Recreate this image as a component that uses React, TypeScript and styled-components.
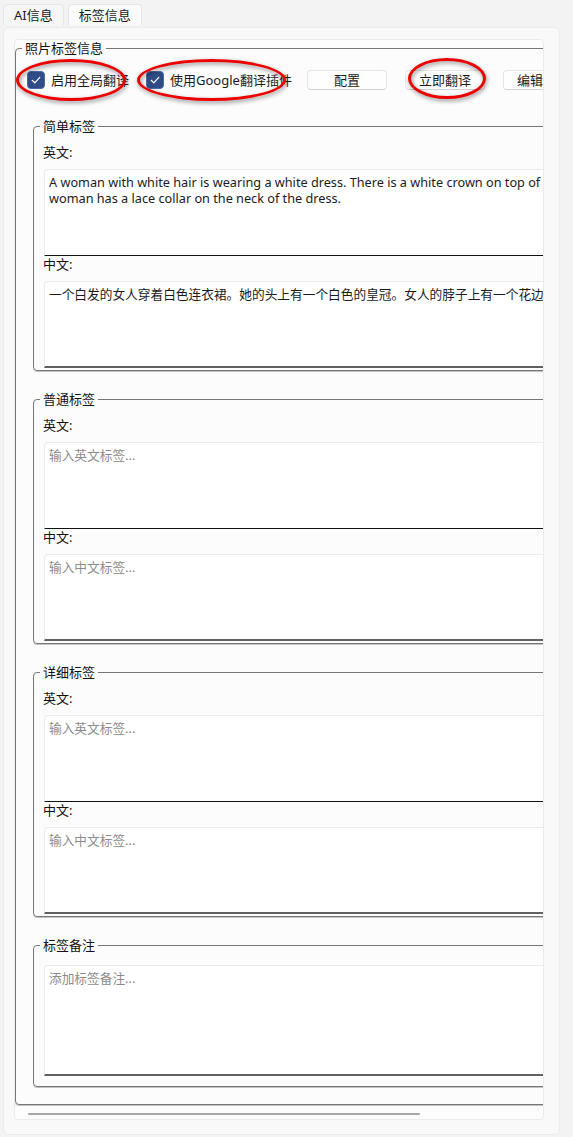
import React from 'react'
import styled, { createGlobalStyle } from 'styled-components'

const EN_TEXT =
    'A woman with white hair is wearing a white dress. There is a white crown on top of her head. The\nwoman has a lace collar on the neck of the dress.'
const ZH_TEXT =
    '一个白发的女人穿着白色连衣裙。她的头上有一个白色的皇冠。女人的脖子上有一个花边领。'

type TagGroup = {
    title: string
    en: string
    zh: string
}

const groups: TagGroup[] = [
    { title: '简单标签', en: EN_TEXT, zh: ZH_TEXT },
    { title: '普通标签', en: '', zh: '' },
    { title: '详细标签', en: '', zh: '' },
]

function CheckMark() {
    return (
        <svg width="12" height="12" viewBox="0 0 12 12">
            <polyline
                points="2.2,6.3 4.8,8.8 9.8,3.4"
                fill="none"
                stroke="#fff"
                strokeWidth="1.2"
                strokeLinecap="round"
                strokeLinejoin="round"
            />
        </svg>
    )
}

export default function App() {
    return (
        <>
            <GlobalStyle />
            <Page>
                <TabBar>
                    <Tab>AI信息</Tab>
                    <Tab $active>标签信息</Tab>
                </TabBar>
                <Card>
                    <ScrollArea>
                        <OuterGroup>
                            <Legend>照片标签信息</Legend>
                            <OuterBody>
                                <ToolRow>
                                    <Annotated $gap={17}>
                                        <CheckItem>
                                            <CheckBox>
                                                <CheckMark />
                                            </CheckBox>
                                            启用全局翻译
                                        </CheckItem>
                                        <Ellipse $left={-11} $top={-12} $w={110} $h={42} />
                                    </Annotated>
                                    <Annotated $gap={15}>
                                        <CheckItem>
                                            <CheckBox>
                                                <CheckMark />
                                            </CheckBox>
                                            使用Google翻译插件
                                        </CheckItem>
                                        <Ellipse $left={-9} $top={-12} $w={149} $h={42} />
                                    </Annotated>
                                    <Annotated $gap={18}>
                                        <Button>配置</Button>
                                    </Annotated>
                                    <Annotated $gap={18}>
                                        <Button>立即翻译</Button>
                                        <Ellipse $left={3} $top={-12} $w={78} $h={41} />
                                    </Annotated>
                                    <Annotated $gap={0}>
                                        <Button>编辑标签</Button>
                                    </Annotated>
                                </ToolRow>
                                <GroupList>
                                    {groups.map((g) => (
                                        <Group key={g.title}>
                                            <Legend>{g.title}</Legend>
                                            <GroupBody>
                                                <FieldLabel>英文:</FieldLabel>
                                                <TextBox
                                                    wrap="off"
                                                    defaultValue={g.en}
                                                    placeholder="输入英文标签..."
                                                    $height={87}
                                                    $dark
                                                />
                                                <FieldLabel>中文:</FieldLabel>
                                                <TextBox
                                                    wrap="off"
                                                    defaultValue={g.zh}
                                                    placeholder="输入中文标签..."
                                                    $height={87}
                                                />
                                            </GroupBody>
                                        </Group>
                                    ))}
                                    <Group>
                                        <Legend>标签备注</Legend>
                                        <NoteBody>
                                            <TextBox
                                                wrap="off"
                                                placeholder="添加标签备注..."
                                                $height={111}
                                            />
                                        </NoteBody>
                                    </Group>
                                </GroupList>
                            </OuterBody>
                        </OuterGroup>
                        <ScrollThumb />
                    </ScrollArea>
                </Card>
            </Page>
        </>
    )
}

const GlobalStyle = createGlobalStyle`
    * {
        box-sizing: border-box;
    }
    html, body {
        margin: 0;
        padding: 0;
        background: #f3f3f3;
    }
    body {
        font-family: "Noto Sans", "Noto Sans CJK SC", sans-serif;
        font-size: 13px;
        color: #1b1b1b;
    }
`

const Page = styled.div`
    width: 573px;
    height: 1137px;
    padding-top: 4px;
    overflow: hidden;
`

const TabBar = styled.div`
    display: flex;
    gap: 4px;
    padding-left: 3px;
    height: 21px;
`

const Tab = styled.div<{ $active?: boolean }>`
    height: 21px;
    padding: 0 10px;
    display: flex;
    align-items: center;
    line-height: 17px;
    background: ${(p) => (p.$active ? '#fbfbfb' : '#f6f6f6')};
    border: 1px solid #e6e6e6;
    border-bottom: none;
    border-radius: 4px 4px 0 0;
    color: #1b1b1b;
`

const Card = styled.div`
    margin: 2px 0 0 3px;
    width: 557px;
    height: 1108px;
    background: #f9f9f9;
    border: 1px solid #ececec;
    border-radius: 6px;
    padding: 11px 0 0 10px;
`

const ScrollArea = styled.div`
    width: 530px;
    height: 1081px;
    background: #fcfcfc;
    border: 1px solid #ebebeb;
    border-radius: 4px;
    overflow: hidden;
`

const OuterGroup = styled.fieldset`
    margin: 0;
    padding: 0;
    width: 780px;
    min-width: 0;
    border: 1px solid #777;
    border-radius: 4px;
    box-shadow: 0 1px 0 #c4c4c4;
`

const Legend = styled.legend`
    margin-left: 6px;
    padding: 0 3px;
    font-size: 13px;
    line-height: 17px;
    color: #111;
`

const OuterBody = styled.div`
    padding: 13px 0 17px 11px;
`

const ToolRow = styled.div`
    display: flex;
    align-items: center;
    height: 20px;
`

const Annotated = styled.div<{ $gap: number }>`
    position: relative;
    display: flex;
    align-items: center;
    flex-shrink: 0;
    margin-right: ${(p) => p.$gap}px;
`

const Ellipse = styled.span<{ $left: number; $top: number; $w: number; $h: number }>`
    position: absolute;
    left: ${(p) => p.$left}px;
    top: ${(p) => p.$top}px;
    width: ${(p) => p.$w}px;
    height: ${(p) => p.$h}px;
    border: 3px solid #ec0000;
    border-radius: 50%;
    filter: drop-shadow(1px 2px 2px rgba(0, 0, 0, 0.45));
    pointer-events: none;
`

const CheckItem = styled.label`
    display: flex;
    align-items: center;
    gap: 6px;
    line-height: 17px;
    white-space: nowrap;
    color: #1b1b1b;
`

const CheckBox = styled.span`
    width: 18px;
    height: 18px;
    border-radius: 4px;
    background: #2f4c86;
    border: 1px solid #4d69a2;
    display: flex;
    align-items: center;
    justify-content: center;
`

const Button = styled.button`
    width: 80px;
    height: 20px;
    padding: 0;
    background: #fefefe;
    border: 1px solid #e6e6e6;
    border-bottom-color: #d2d2d2;
    border-radius: 4px;
    font-family: "Noto Sans", "Noto Sans CJK SC", sans-serif;
    font-size: 13px;
    line-height: 17px;
    color: #1b1b1b;
    white-space: nowrap;
`

const GroupList = styled.div`
    margin: 28px 0 0 6px;
    display: flex;
    flex-direction: column;
    gap: 20px;
`

const Group = styled.fieldset`
    margin: 0;
    padding: 0;
    width: 740px;
    min-width: 0;
    border: 1px solid #777;
    border-radius: 4px;
    box-shadow: 0 1px 0 #c4c4c4;
`

const GroupBody = styled.div`
    padding: 9px 0 2px 9px;
`

const NoteBody = styled.div`
    padding: 3px 0 10px 9px;
`

const FieldLabel = styled.div`
    line-height: 17px;
    height: 17px;
    color: #111;
`

const TextBox = styled.textarea<{ $height: number; $dark?: boolean }>`
    display: block;
    margin: 8px 0 0 1px;
    width: 700px;
    height: ${(p) => p.$height}px;
    padding: 4px 4px;
    resize: none;
    overflow: hidden;
    background: #fff;
    border: 1px solid #ececec;
    border-bottom: ${(p) => (p.$dark ? '1px solid #111' : '2px solid #616161')};
    border-radius: 4px 4px 0 0;
    font-family: "Noto Sans", "Noto Sans CJK SC", sans-serif;
    font-size: 12.7px;
    line-height: 16px;
    color: #1b1b1b;
    outline: none;

    &::placeholder {
        color: #8c8c8c;
    }
`

const ScrollThumb = styled.div`
    margin: 8px 0 0 13px;
    width: 392px;
    height: 2px;
    border-radius: 1px;
    background: #a6a6a6;
`
